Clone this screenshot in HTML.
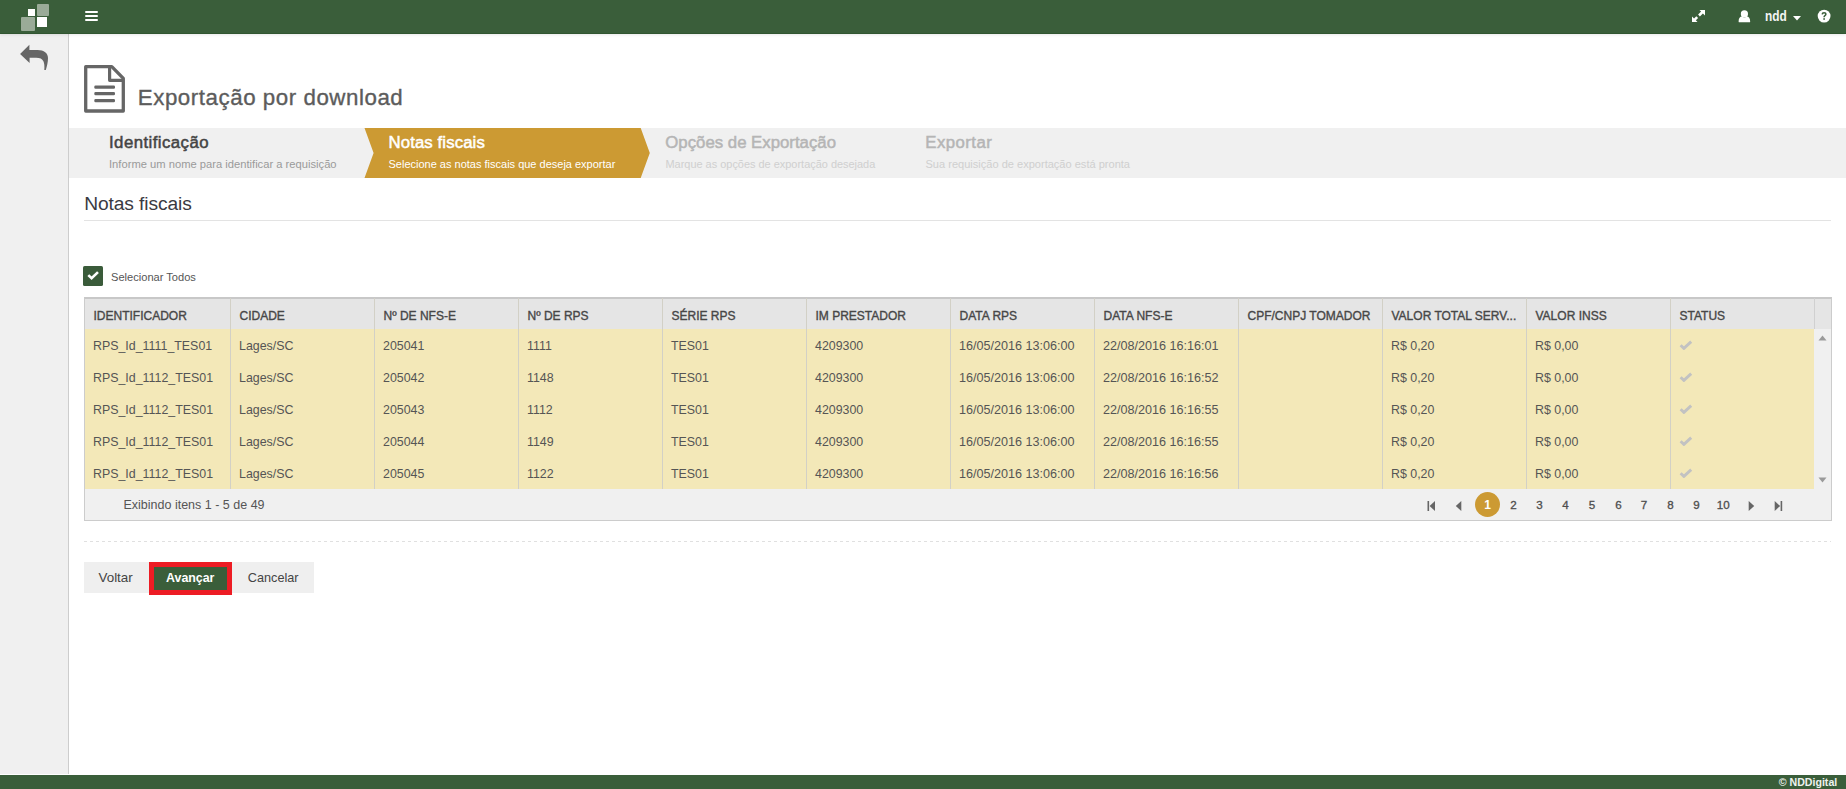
<!DOCTYPE html>
<html><head><meta charset="utf-8">
<style>
html,body{margin:0;padding:0;}
body{width:1846px;height:789px;position:relative;overflow:hidden;background:#fff;font-family:"Liberation Sans",sans-serif;color:#555;}
.a{position:absolute;white-space:nowrap;line-height:1;}
#top{position:absolute;left:0;top:0;width:1846px;height:34px;background:#3a5e3a;box-shadow:0 1px 3px rgba(0,0,0,.09);z-index:2}
#top:after{content:"";position:absolute;left:0;right:0;bottom:0;height:1px;background:#315631}
#side{position:absolute;left:0;top:34px;width:68px;height:740px;background:#f0f0f0;border-right:1px solid #cdcdcd}
#foot{position:absolute;left:0;top:775px;width:1846px;height:14px;background:#3a5e3a}
#wiz{position:absolute;left:69px;top:128px;width:1777px;height:50px;background:#f0f0f0}
.sep{position:absolute;width:1px;}
</style></head><body>
<div id="top"></div>
<div class="a" style="left:28px;top:9px;width:7px;height:7px;background:#fff;z-index:3"></div>
<div class="a" style="left:37px;top:4px;width:12px;height:12px;background:#9aab98;border-radius:1px;z-index:3"></div>
<div class="a" style="left:21px;top:17px;width:14px;height:14px;background:#9aab98;border-radius:1px;z-index:3"></div>
<div class="a" style="left:37px;top:17px;width:10px;height:10px;background:#fff;z-index:3"></div>
<div class="a" style="left:85px;top:11px;width:13px;height:2px;background:#fff;border-radius:1px;z-index:3"></div>
<div class="a" style="left:85px;top:15px;width:13px;height:2px;background:#fff;border-radius:1px;z-index:3"></div>
<div class="a" style="left:85px;top:19px;width:13px;height:2px;background:#fff;border-radius:1px;z-index:3"></div>
<svg class="a" style="left:1691px;top:9px;z-index:3" width="15" height="15" viewBox="0 0 15 15">
<path d="M8.5 1 H14 V6.5 L11.9 4.4 L8.9 7.4 L7.1 5.6 L10.1 2.6 Z M1 7.5 V13 H6.5 L4.85 11.35 L7.1 9.1 L5.3 7.3 L3.05 9.55 Z" fill="#fff"/></svg>
<svg class="a" style="left:1737.5px;top:9.6px;z-index:3" width="14" height="14" viewBox="0 0 14 14">
<circle cx="6.4" cy="3.9" r="3.6" fill="#fff"/><path d="M0.6 11.4 C0.6 8.2 2.2 6.4 3.8 6.4 Q6.4 8.6 9 6.4 C10.6 6.4 12.2 8.2 12.2 11.4 Q12.2 12.3 11.3 12.3 H1.5 Q0.6 12.3 0.6 11.4Z" fill="#fff"/></svg>
<div class="a " style="left:1764.8px;top:9.45px;font-size:14px;color:#f4f4f4;font-weight:bold;z-index:3;transform:scaleX(0.85);transform-origin:0 0">ndd</div>
<svg class="a" style="left:1793px;top:15.6px;z-index:3" width="8" height="5" viewBox="0 0 8 5"><path d="M0 0H8L4 4.5Z" fill="#fff"/></svg>
<svg class="a" style="left:1817px;top:9px;z-index:3" width="14" height="14" viewBox="0 0 14 14">
<circle cx="7.1" cy="7.1" r="6.4" fill="#fff"/>
<path d="M5.2 5.4 Q5.3 3.7 7.1 3.7 Q8.9 3.7 8.9 5.1 Q8.9 6 7.9 6.6 Q7.1 7.1 7.1 8.3" fill="none" stroke="#3a5e3a" stroke-width="1.55"/>
<rect x="6.3" y="9.2" width="1.6" height="1.6" fill="#3a5e3a"/></svg>
<div id="side"></div>
<svg class="a" style="left:16px;top:40px" width="36" height="34" viewBox="0 0 36 34">
<path d="M4.1 14 L13.4 4.8 V10.1 H21.6 C28 10.1 32 13.2 32 18 C32 22.5 30.9 26.5 29.8 29.9 H28.3 C28.6 26.5 28.4 23.5 27.4 21.3 C26.2 18.8 24 17.7 20 17.7 H13.6 V23 Z" fill="#666"/></svg>
<div id="foot"></div>
<div class="a " style="left:1778.8px;top:776.83px;font-size:10.6px;color:#eef2ee;font-weight:bold">© NDDigital</div>
<svg class="a" style="left:84px;top:65px" width="42" height="48" viewBox="0 0 42 48">
<path d="M1.7 1.7 H27.8 L39.3 13.4 V46 H1.7 Z" fill="none" stroke="#666" stroke-width="3.3" stroke-linejoin="round"/>
<path d="M25.6 1.7 V15.3 H39" fill="none" stroke="#666" stroke-width="3.2" stroke-linejoin="round"/>
<rect x="10.3" y="20.5" width="20.7" height="3.2" rx="1.2" fill="#666"/>
<rect x="10.3" y="27" width="20.7" height="3.2" rx="1.2" fill="#666"/>
<rect x="10.3" y="34" width="20.7" height="3.2" rx="1.2" fill="#666"/>
</svg>
<div class="a " style="left:137.8px;top:87.12px;font-size:22.3px;color:#5c5c5c;letter-spacing:0.55px;-webkit-text-stroke:0.35px #5c5c5c">Exportação por download</div>
<div id="wiz"></div>
<svg class="a" style="left:364px;top:128px" width="287" height="50" viewBox="0 0 287 50"><path d="M0.5 0 H276.7 L285.8 25 L276.7 50 H0.5 L9.6 25 Z" fill="#cc9a33"/></svg>
<div class="a " style="left:109px;top:135.08px;font-size:16.8px;color:#444;letter-spacing:0.44px;-webkit-text-stroke:0.5px #444">Identificação</div>
<div class="a " style="left:109px;top:158.72px;font-size:11.2px;color:#9a9a9a">Informe um nome para identificar a requisição</div>
<div class="a " style="left:388.5px;top:134.78px;font-size:16.8px;color:#fff;letter-spacing:0.1px;-webkit-text-stroke:0.5px #fff">Notas fiscais</div>
<div class="a " style="left:388.5px;top:158.89px;font-size:11px;color:#fff">Selecione as notas fiscais que deseja exportar</div>
<div class="a " style="left:665.3px;top:135.08px;font-size:16.8px;color:#b5b5b5;-webkit-text-stroke:0.5px #b5b5b5">Opções de Exportação</div>
<div class="a " style="left:665.5px;top:158.93px;font-size:10.95px;color:#cfcfcf">Marque as opções de exportação desejada</div>
<div class="a " style="left:925.3px;top:135.38px;font-size:16.8px;color:#b5b5b5;letter-spacing:0.44px;-webkit-text-stroke:0.5px #b5b5b5">Exportar</div>
<div class="a " style="left:925.5px;top:158.85px;font-size:11.05px;color:#cfcfcf">Sua requisição de exportação está pronta</div>
<div class="a " style="left:84.2px;top:194.15px;font-size:19.2px;color:#3a3a42;letter-spacing:-0.1px">Notas fiscais</div>
<div class="a" style="left:84px;top:220px;width:1747px;height:1px;background:#e3e3e3"></div>
<div class="a" style="left:83px;top:266px;width:20px;height:20px;background:#3a5b3a;border-radius:1.6px"></div>
<svg class="a" style="left:86px;top:270px" width="14" height="12" viewBox="0 0 14 12"><path d="M2.3 5.1 L5.6 8.3 L12 2.1" fill="none" stroke="#fff" stroke-width="2.6"/></svg>
<div class="a " style="left:111px;top:271.60px;font-size:11.1px;color:#555">Selecionar Todos</div>
<div class="a" style="left:84px;top:297px;width:1746px;height:221px;border:1px solid #cccccc;border-top:2px solid #c8c8c8;background:#f0f0f0"></div>
<div class="a" style="left:85px;top:299px;width:1746px;height:30px;background:#e5e5e5"></div>
<div class="a" style="left:85px;top:329px;width:1729px;height:160px;background:#f3e8b8"></div>
<div class="sep" style="left:230px;top:298px;height:191px;background:#d2d0c6"></div>
<div class="sep" style="left:374px;top:298px;height:191px;background:#d2d0c6"></div>
<div class="sep" style="left:518px;top:298px;height:191px;background:#d2d0c6"></div>
<div class="sep" style="left:662px;top:298px;height:191px;background:#d2d0c6"></div>
<div class="sep" style="left:806px;top:298px;height:191px;background:#d2d0c6"></div>
<div class="sep" style="left:950px;top:298px;height:191px;background:#d2d0c6"></div>
<div class="sep" style="left:1094px;top:298px;height:191px;background:#d2d0c6"></div>
<div class="sep" style="left:1238px;top:298px;height:191px;background:#d2d0c6"></div>
<div class="sep" style="left:1382px;top:298px;height:191px;background:#d2d0c6"></div>
<div class="sep" style="left:1526px;top:298px;height:191px;background:#d2d0c6"></div>
<div class="sep" style="left:1670px;top:298px;height:191px;background:#d2d0c6"></div>
<div class="sep" style="left:1814px;top:298px;height:31px;background:#d0d0d0"></div>
<div class="a " style="left:93.5px;top:310.14px;font-size:12px;color:#474747;-webkit-text-stroke:0.35px #474747">IDENTIFICADOR</div>
<div class="a " style="left:239.5px;top:310.14px;font-size:12px;color:#474747;-webkit-text-stroke:0.35px #474747">CIDADE</div>
<div class="a " style="left:383.5px;top:310.14px;font-size:12px;color:#474747;-webkit-text-stroke:0.35px #474747">Nº DE NFS-E</div>
<div class="a " style="left:527.5px;top:310.14px;font-size:12px;color:#474747;-webkit-text-stroke:0.35px #474747">Nº DE RPS</div>
<div class="a " style="left:671.5px;top:310.14px;font-size:12px;color:#474747;-webkit-text-stroke:0.35px #474747">SÉRIE RPS</div>
<div class="a " style="left:815.5px;top:310.14px;font-size:12px;color:#474747;-webkit-text-stroke:0.35px #474747">IM PRESTADOR</div>
<div class="a " style="left:959.5px;top:310.14px;font-size:12px;color:#474747;-webkit-text-stroke:0.35px #474747">DATA RPS</div>
<div class="a " style="left:1103.5px;top:310.14px;font-size:12px;color:#474747;-webkit-text-stroke:0.35px #474747">DATA NFS-E</div>
<div class="a " style="left:1247.5px;top:310.14px;font-size:12px;color:#474747;-webkit-text-stroke:0.35px #474747">CPF/CNPJ TOMADOR</div>
<div class="a " style="left:1391.5px;top:310.14px;font-size:12px;color:#474747;-webkit-text-stroke:0.35px #474747">VALOR TOTAL SERV...</div>
<div class="a " style="left:1535.5px;top:310.14px;font-size:12px;color:#474747;-webkit-text-stroke:0.35px #474747">VALOR INSS</div>
<div class="a " style="left:1679.5px;top:310.14px;font-size:12px;color:#474747;-webkit-text-stroke:0.35px #474747">STATUS</div>
<div class="a " style="left:93px;top:339.50px;font-size:12.4px;color:#555">RPS_Id_1111_TES01</div>
<div class="a " style="left:239px;top:339.50px;font-size:12.4px;color:#555">Lages/SC</div>
<div class="a " style="left:383px;top:339.50px;font-size:12.4px;color:#555">205041</div>
<div class="a " style="left:527px;top:339.50px;font-size:12.4px;color:#555">1111</div>
<div class="a " style="left:671px;top:339.50px;font-size:12.4px;color:#555">TES01</div>
<div class="a " style="left:815px;top:339.50px;font-size:12.4px;color:#555">4209300</div>
<div class="a " style="left:959px;top:339.93px;font-size:12.6px;color:#555">16/05/2016 13:06:00</div>
<div class="a " style="left:1103px;top:339.93px;font-size:12.6px;color:#555">22/08/2016 16:16:01</div>
<div class="a " style="left:1391px;top:339.50px;font-size:12.4px;color:#555">R$ 0,20</div>
<div class="a " style="left:1535px;top:339.50px;font-size:12.4px;color:#555">R$ 0,00</div>
<svg class="a" style="left:1679px;top:340px" width="14" height="10" viewBox="0 0 14 10"><path d="M1.6 5.2 L4.9 8.4 L12.2 1.6" fill="none" stroke="#c2c2c2" stroke-width="2.9"/></svg>
<div class="a " style="left:93px;top:371.50px;font-size:12.4px;color:#555">RPS_Id_1112_TES01</div>
<div class="a " style="left:239px;top:371.50px;font-size:12.4px;color:#555">Lages/SC</div>
<div class="a " style="left:383px;top:371.50px;font-size:12.4px;color:#555">205042</div>
<div class="a " style="left:527px;top:371.50px;font-size:12.4px;color:#555">1148</div>
<div class="a " style="left:671px;top:371.50px;font-size:12.4px;color:#555">TES01</div>
<div class="a " style="left:815px;top:371.50px;font-size:12.4px;color:#555">4209300</div>
<div class="a " style="left:959px;top:371.93px;font-size:12.6px;color:#555">16/05/2016 13:06:00</div>
<div class="a " style="left:1103px;top:371.93px;font-size:12.6px;color:#555">22/08/2016 16:16:52</div>
<div class="a " style="left:1391px;top:371.50px;font-size:12.4px;color:#555">R$ 0,20</div>
<div class="a " style="left:1535px;top:371.50px;font-size:12.4px;color:#555">R$ 0,00</div>
<svg class="a" style="left:1679px;top:372px" width="14" height="10" viewBox="0 0 14 10"><path d="M1.6 5.2 L4.9 8.4 L12.2 1.6" fill="none" stroke="#c2c2c2" stroke-width="2.9"/></svg>
<div class="a " style="left:93px;top:403.50px;font-size:12.4px;color:#555">RPS_Id_1112_TES01</div>
<div class="a " style="left:239px;top:403.50px;font-size:12.4px;color:#555">Lages/SC</div>
<div class="a " style="left:383px;top:403.50px;font-size:12.4px;color:#555">205043</div>
<div class="a " style="left:527px;top:403.50px;font-size:12.4px;color:#555">1112</div>
<div class="a " style="left:671px;top:403.50px;font-size:12.4px;color:#555">TES01</div>
<div class="a " style="left:815px;top:403.50px;font-size:12.4px;color:#555">4209300</div>
<div class="a " style="left:959px;top:403.93px;font-size:12.6px;color:#555">16/05/2016 13:06:00</div>
<div class="a " style="left:1103px;top:403.93px;font-size:12.6px;color:#555">22/08/2016 16:16:55</div>
<div class="a " style="left:1391px;top:403.50px;font-size:12.4px;color:#555">R$ 0,20</div>
<div class="a " style="left:1535px;top:403.50px;font-size:12.4px;color:#555">R$ 0,00</div>
<svg class="a" style="left:1679px;top:404px" width="14" height="10" viewBox="0 0 14 10"><path d="M1.6 5.2 L4.9 8.4 L12.2 1.6" fill="none" stroke="#c2c2c2" stroke-width="2.9"/></svg>
<div class="a " style="left:93px;top:435.50px;font-size:12.4px;color:#555">RPS_Id_1112_TES01</div>
<div class="a " style="left:239px;top:435.50px;font-size:12.4px;color:#555">Lages/SC</div>
<div class="a " style="left:383px;top:435.50px;font-size:12.4px;color:#555">205044</div>
<div class="a " style="left:527px;top:435.50px;font-size:12.4px;color:#555">1149</div>
<div class="a " style="left:671px;top:435.50px;font-size:12.4px;color:#555">TES01</div>
<div class="a " style="left:815px;top:435.50px;font-size:12.4px;color:#555">4209300</div>
<div class="a " style="left:959px;top:435.93px;font-size:12.6px;color:#555">16/05/2016 13:06:00</div>
<div class="a " style="left:1103px;top:435.93px;font-size:12.6px;color:#555">22/08/2016 16:16:55</div>
<div class="a " style="left:1391px;top:435.50px;font-size:12.4px;color:#555">R$ 0,20</div>
<div class="a " style="left:1535px;top:435.50px;font-size:12.4px;color:#555">R$ 0,00</div>
<svg class="a" style="left:1679px;top:436px" width="14" height="10" viewBox="0 0 14 10"><path d="M1.6 5.2 L4.9 8.4 L12.2 1.6" fill="none" stroke="#c2c2c2" stroke-width="2.9"/></svg>
<div class="a " style="left:93px;top:467.50px;font-size:12.4px;color:#555">RPS_Id_1112_TES01</div>
<div class="a " style="left:239px;top:467.50px;font-size:12.4px;color:#555">Lages/SC</div>
<div class="a " style="left:383px;top:467.50px;font-size:12.4px;color:#555">205045</div>
<div class="a " style="left:527px;top:467.50px;font-size:12.4px;color:#555">1122</div>
<div class="a " style="left:671px;top:467.50px;font-size:12.4px;color:#555">TES01</div>
<div class="a " style="left:815px;top:467.50px;font-size:12.4px;color:#555">4209300</div>
<div class="a " style="left:959px;top:467.93px;font-size:12.6px;color:#555">16/05/2016 13:06:00</div>
<div class="a " style="left:1103px;top:467.93px;font-size:12.6px;color:#555">22/08/2016 16:16:56</div>
<div class="a " style="left:1391px;top:467.50px;font-size:12.4px;color:#555">R$ 0,20</div>
<div class="a " style="left:1535px;top:467.50px;font-size:12.4px;color:#555">R$ 0,00</div>
<svg class="a" style="left:1679px;top:468px" width="14" height="10" viewBox="0 0 14 10"><path d="M1.6 5.2 L4.9 8.4 L12.2 1.6" fill="none" stroke="#c2c2c2" stroke-width="2.9"/></svg>
<svg class="a" style="left:1818px;top:335px" width="9" height="6" viewBox="0 0 9 6"><path d="M0.5 5.5 L4.5 0.5 L8.5 5.5Z" fill="#9a9a9a"/></svg>
<svg class="a" style="left:1818px;top:477px" width="9" height="6" viewBox="0 0 9 6"><path d="M0.5 0.5 L4.5 5.5 L8.5 0.5Z" fill="#9a9a9a"/></svg>
<div class="a " style="left:123.5px;top:498.82px;font-size:12.5px;color:#555">Exibindo itens 1 - 5 de 49</div>
<svg class="a" style="left:1427px;top:500px" width="10" height="12" viewBox="0 0 10 12"><rect x="0.5" y="1" width="1.6" height="10" fill="#666"/><path d="M8 1 L2.6 6 L8 11Z" fill="#666"/></svg>
<svg class="a" style="left:1455px;top:500px" width="8" height="12" viewBox="0 0 8 12"><path d="M6.3 1 L0.8 6 L6.3 11Z" fill="#666"/></svg>
<div class="a" style="left:1475px;top:492px;width:25px;height:25px;border-radius:50%;background:#cc9a33"></div>
<div class="a " style="left:1484.3px;top:499.34px;font-size:12px;color:#fff;font-weight:bold">1</div>
<div class="a " style="left:1510.2px;top:499.48px;font-size:11.6px;color:#4d4d4d;letter-spacing:0.2px;-webkit-text-stroke:0.3px #4d4d4d">2</div>
<div class="a " style="left:1536.2px;top:499.48px;font-size:11.6px;color:#4d4d4d;letter-spacing:0.2px;-webkit-text-stroke:0.3px #4d4d4d">3</div>
<div class="a " style="left:1562.2px;top:499.48px;font-size:11.6px;color:#4d4d4d;letter-spacing:0.2px;-webkit-text-stroke:0.3px #4d4d4d">4</div>
<div class="a " style="left:1588.7px;top:499.48px;font-size:11.6px;color:#4d4d4d;letter-spacing:0.2px;-webkit-text-stroke:0.3px #4d4d4d">5</div>
<div class="a " style="left:1615.2px;top:499.48px;font-size:11.6px;color:#4d4d4d;letter-spacing:0.2px;-webkit-text-stroke:0.3px #4d4d4d">6</div>
<div class="a " style="left:1640.7px;top:499.48px;font-size:11.6px;color:#4d4d4d;letter-spacing:0.2px;-webkit-text-stroke:0.3px #4d4d4d">7</div>
<div class="a " style="left:1667.2px;top:499.48px;font-size:11.6px;color:#4d4d4d;letter-spacing:0.2px;-webkit-text-stroke:0.3px #4d4d4d">8</div>
<div class="a " style="left:1693.2px;top:499.48px;font-size:11.6px;color:#4d4d4d;letter-spacing:0.2px;-webkit-text-stroke:0.3px #4d4d4d">9</div>
<div class="a " style="left:1716.7px;top:499.48px;font-size:11.6px;color:#4d4d4d;letter-spacing:0.2px;-webkit-text-stroke:0.3px #4d4d4d">10</div>
<svg class="a" style="left:1748px;top:500px" width="8" height="12" viewBox="0 0 8 12"><path d="M0.7 1 L6.2 6 L0.7 11Z" fill="#666"/></svg>
<svg class="a" style="left:1774px;top:500px" width="10" height="12" viewBox="0 0 10 12"><path d="M0.7 1 L6.1 6 L0.7 11Z" fill="#666"/><rect x="6.6" y="1" width="1.6" height="10" fill="#666"/></svg>
<div class="a" style="left:84px;top:541px;width:1747px;height:1px;background:repeating-linear-gradient(90deg,#e0e0e0 0 3px,transparent 3px 6px)"></div>
<div class="a" style="left:84px;top:562px;width:230px;height:31px;background:#efefef"></div>
<div class="a" style="left:149px;top:562px;width:73px;height:23px;border:5px solid #ed1c24;background:#3a5e3a"></div>
<div class="a " style="left:98.5px;top:570.76px;font-size:13.4px;color:#444">Voltar</div>
<div class="a " style="left:166px;top:571.60px;font-size:12.4px;color:#fff;font-weight:bold">Avançar</div>
<div class="a " style="left:247.8px;top:572.25px;font-size:12.7px;color:#444">Cancelar</div>
</body></html>
